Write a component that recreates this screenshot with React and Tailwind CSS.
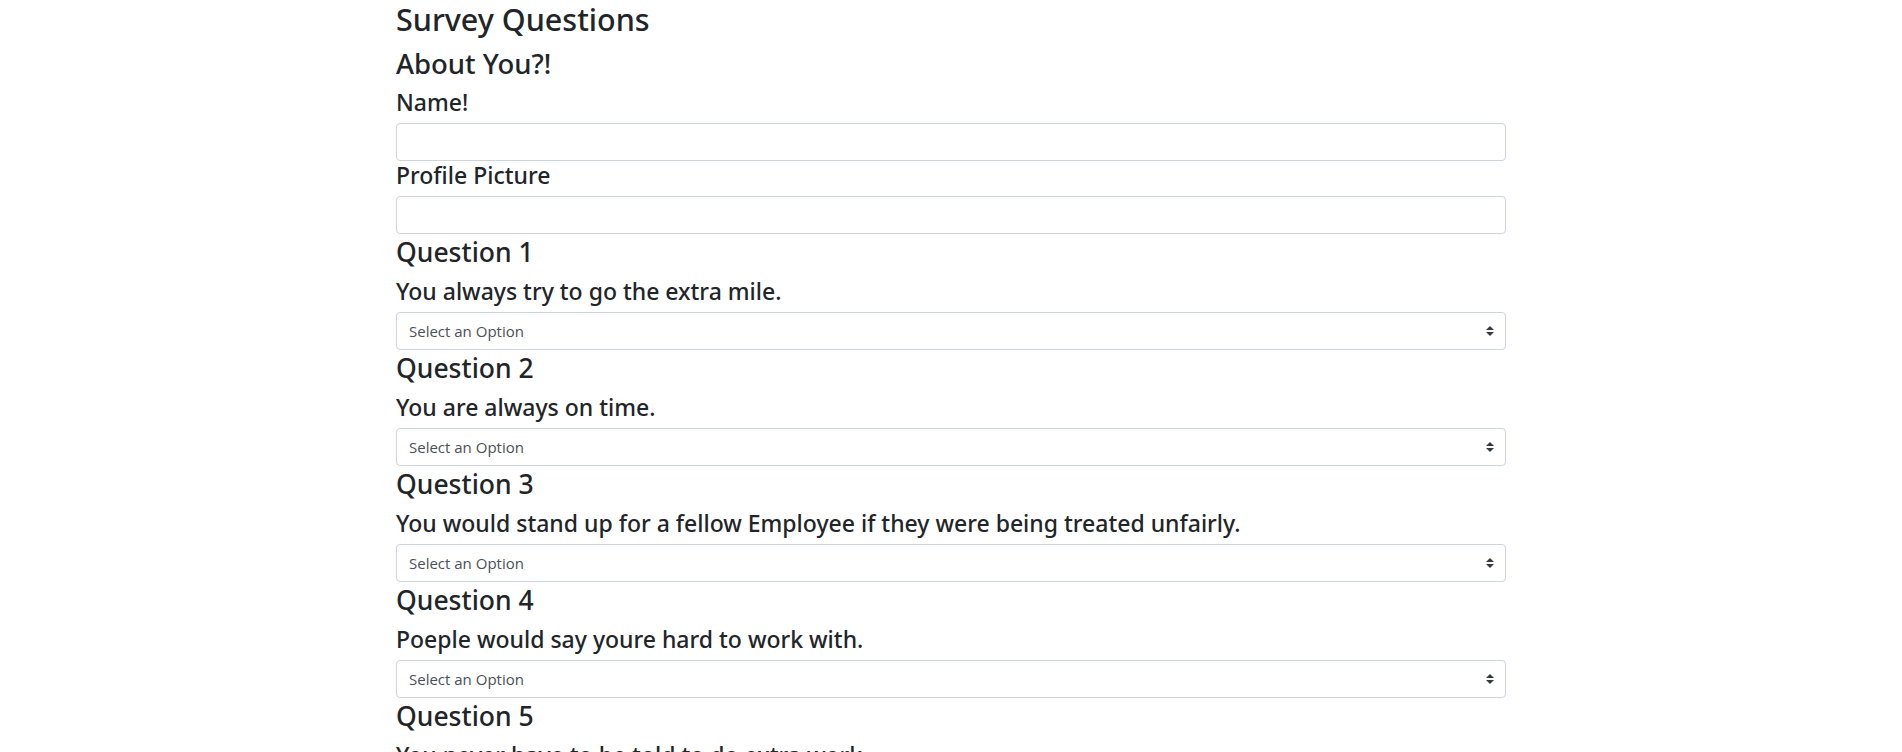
import React, { useState } from 'react';

const questions = [
  'You always try to go the extra mile.',
  'You are always on time.',
  'You would stand up for a fellow Employee if they were being treated unfairly.',
  'Poeple would say youre hard to work with.',
  'You never have to be told to do extra work.',
  'You enjoy helping others.',
  'You like to work in a team.',
];

const TextField = ({ label, value, onChange }) => (
  <div>
    <label className="block pt-[1px] text-[23px] leading-[26px] font-medium text-[#212529] mb-2 font-['Noto_Sans','Open_Sans',sans-serif]">
      {label}
    </label>
    <input
      type="text"
      value={value}
      onChange={(e) => onChange(e.target.value)}
      className="block w-full h-[38px] px-3 text-base text-[#495057] bg-white border border-[#ced4da] rounded outline-none"
    />
  </div>
);

const QuestionSelect = ({ index, text, value, onChange }) => (
  <div>
    <h3 className="pt-[2px] text-[26.5px] leading-[33px] font-medium text-[#212529] mb-2 font-['Noto_Sans','Open_Sans',sans-serif]">
      Question {index + 1}
    </h3>
    <label className="block pt-[1px] text-[23px] leading-[26px] font-medium text-[#212529] mb-2 font-['Noto_Sans','Open_Sans',sans-serif]">
      {text}
    </label>
    <div className="relative">
      <select
        value={value}
        onChange={(e) => onChange(e.target.value)}
        className="block w-full h-[38px] pl-3 pr-7 text-[15px] text-[#495057] bg-white border border-[#ced4da] rounded appearance-none outline-none"
      >
        <option value="">Select an Option</option>
        <option value="1">1 (Strongly Disagree)</option>
        <option value="2">2</option>
        <option value="3">3</option>
        <option value="4">4</option>
        <option value="5">5 (Strongly Agree)</option>
      </select>
      {/* double arrow, like bootstrap's custom-select */}
      <svg
        className="absolute right-3 top-1/2 -translate-y-1/2 pointer-events-none"
        width="8"
        height="10"
        viewBox="0 0 4 5"
      >
        <path fill="#343a40" d="M2 0L0 2h4zm0 5L0 3h4z" />
      </svg>
    </div>
  </div>
);

const App = () => {
  const [name, setName] = useState('');
  const [photo, setPhoto] = useState('');
  const [answers, setAnswers] = useState(questions.map(() => ''));

  const setAnswer = (i, v) => {
    const next = [...answers];
    next[i] = v;
    setAnswers(next);
  };

  return (
    <div className="min-h-screen bg-white font-['Open_Sans','Noto_Sans','Liberation_Sans',sans-serif]">
      <div className="max-w-[1140px] mx-auto px-[15px]">
        <h2 className="pt-[1px] text-[30.5px] leading-[37px] font-medium text-[#212529] mb-2 font-['Noto_Sans','Open_Sans',sans-serif]">
          Survey Questions
        </h2>
        <h3 className="pt-[2px] text-[27.5px] leading-[32px] font-medium text-[#212529] mb-2 font-['Noto_Sans','Open_Sans',sans-serif]">
          About You?!
        </h3>
        <TextField label="Name!" value={name} onChange={setName} />
        <TextField label="Profile Picture" value={photo} onChange={setPhoto} />
        {questions.map((q, i) => (
          <QuestionSelect key={i} index={i} text={q} value={answers[i]} onChange={(v) => setAnswer(i, v)} />
        ))}
      </div>
    </div>
  );
};

export default App;
